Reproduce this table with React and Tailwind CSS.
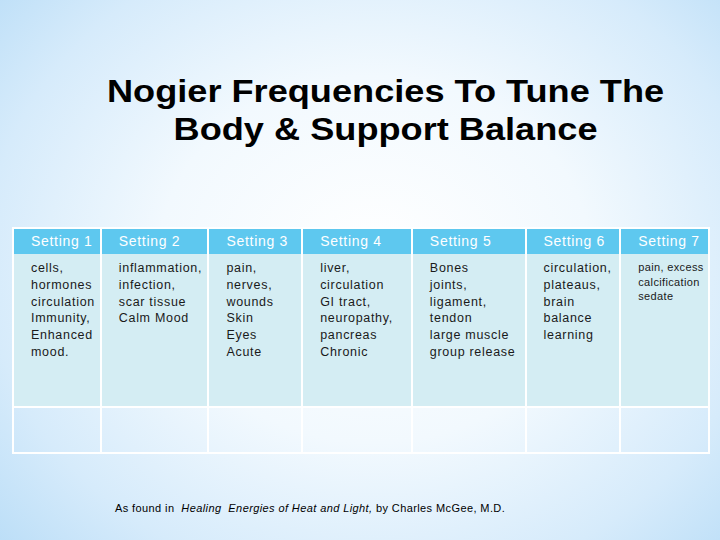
import React from "react";

const cols = [
  { w: "w-[86px]", title: "Setting 1", lines: ["cells,", "hormones", "circulation", "Immunity,", "Enhanced", "mood."] },
  { w: "w-[108px]", title: "Setting 2", lines: ["inflammation,", "infection,", "scar tissue", "Calm Mood"] },
  { w: "w-[94px]", title: "Setting 3", lines: ["pain,", "nerves,", "wounds", "Skin", "Eyes", "Acute"] },
  { w: "w-[110px]", title: "Setting 4", lines: ["liver,", "circulation", "GI tract,", "neuropathy,", "pancreas", "Chronic"] },
  { w: "w-[114px]", title: "Setting 5", lines: ["Bones", "joints,", "ligament,", "tendon", "large muscle", "group release"] },
  { w: "w-[95px]", title: "Setting 6", lines: ["circulation,", "plateaus,", "brain", "balance", "learning"] },
  { w: "w-[89px]", title: "Setting 7", lines: ["pain, excess", "calcification", "sedate"], small: true },
];

export default function App() {
  return (
    <div
      className="w-[720px] h-[540px] overflow-hidden bg-[radial-gradient(ellipse_75%_85%_at_52%_48%,#ffffff_0%,#f2f9fe_40%,#d6ebfb_72%,#b3daf6_100%)]"
      style={{ fontFamily: '"Liberation Sans", Arial, sans-serif' }}
    >
      <div className="pt-[72px] pl-[52px] flex justify-center">
        <h1 className="inline-block scale-x-[1.13] text-center text-[32px] leading-[38px] font-bold text-black">
          Nogier Frequencies To Tune The
          <br />
          Body &amp; Support Balance
        </h1>
      </div>

      <div className="mt-[79px] ml-[12px] w-[698px] border-2 border-white flex">
        {cols.map((c, i) => (
          <div key={i} className={`${c.w} flex flex-col ${i > 0 ? "border-l-2 border-white" : ""}`}>
            <div className="h-[25px] bg-[#5ec8ef] pl-[17px] flex items-center text-white text-[14px] tracking-[0.7px]">
              {c.title}
            </div>
            <div className="h-[154px] bg-[#d4edf3] border-b-2 border-white pl-[17px] pt-[6px]">
              {c.lines.map((l, k) => (
                <div
                  key={k}
                  className={
                    c.small
                      ? "text-[11px] leading-[14.5px] tracking-[0.35px] text-[#1a1a1a] whitespace-nowrap"
                      : "text-[12.5px] leading-[16.8px] tracking-[0.7px] text-[#1a1a1a] whitespace-nowrap"
                  }
                >
                  {l}
                </div>
              ))}
            </div>
            <div className="h-[44px]"></div>
          </div>
        ))}
      </div>

      <div className="mt-[46px] pl-[115px] text-[11px] tracking-[0.4px] text-black">
        As found in&nbsp; <i>Healing&nbsp; Energies of Heat and Light,</i> by Charles McGee, M.D.
      </div>
    </div>
  );
}
